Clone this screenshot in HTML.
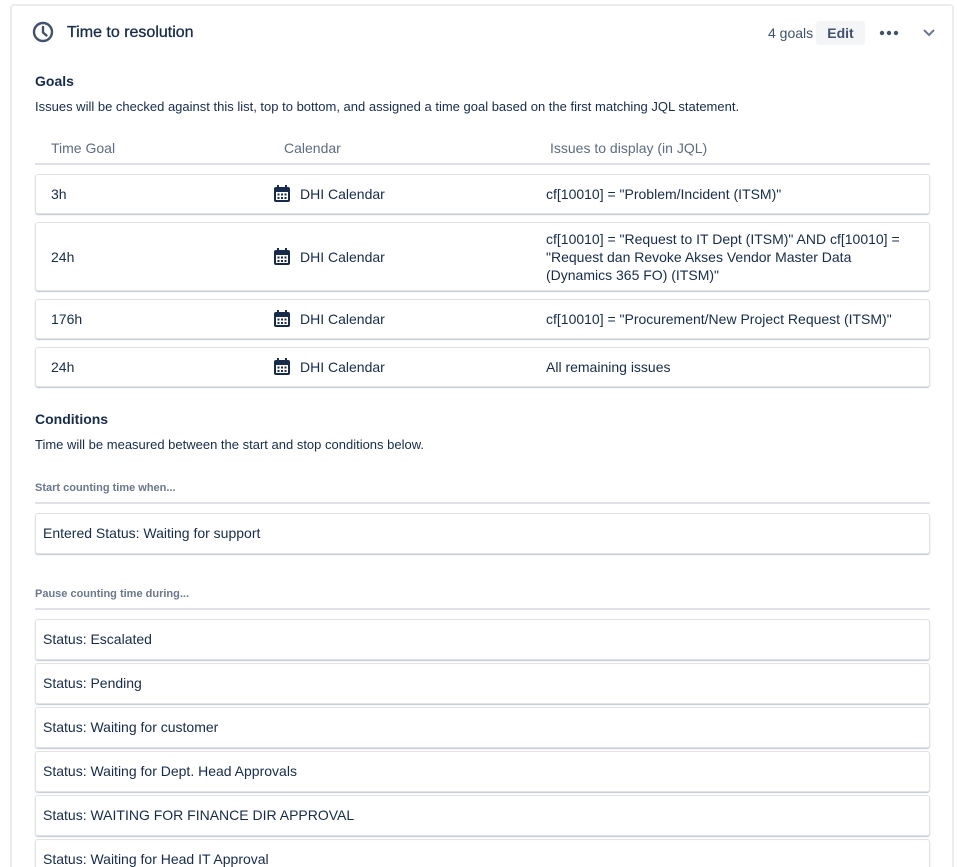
<!DOCTYPE html>
<html style="height:867px;overflow:hidden"><head><style>
*{box-sizing:border-box;margin:0;padding:0}
body{width:957px;height:867px;overflow:hidden;background:#fff;font-family:"Liberation Sans",sans-serif;color:#172b4d;font-size:14px;position:relative}
.card{position:absolute;left:10px;top:4px;width:944px;height:880px;border:2px solid #ebecf0;border-radius:4px}
.abs{position:absolute}
.row{position:absolute;left:35px;width:895px;border:1px solid #dfe1e6;border-radius:3px;box-shadow:0 1px 1px rgba(9,30,66,.25)}
.row span{position:absolute;top:50%;transform:translateY(-50%)}
.cal{left:237px;display:flex;align-items:center;gap:9px}
.lbl{font-size:11px;font-weight:bold;color:#6b778c}
.line{position:absolute;left:35px;width:895px;height:2px;background:#dfe1e6}
.cond{position:absolute;left:35px;width:895px;height:41px;border:1px solid #dfe1e6;border-radius:3px;box-shadow:0 1px 1px rgba(9,30,66,.25);padding-left:7px;line-height:39px}
</style></head><body>
<div class="card"></div>
<svg class="abs" style="left:32px;top:21px" width="22" height="22" viewBox="0 0 22 22"><circle cx="11" cy="11" r="9" fill="none" stroke="#42526e" stroke-width="2.4"/><path d="M11 6v5.5l3.5 3" fill="none" stroke="#42526e" stroke-width="2.4" stroke-linecap="round"/></svg>
<div class="abs" style="left:67px;top:24px;font-size:16px;-webkit-text-stroke:0.3px #172b4d">Time to resolution</div>
<div class="abs" style="left:768px;top:25px;color:#42526e">4 goals</div>
<div class="abs" style="left:816px;top:21px;width:49px;height:24px;background:#f4f5f7;border-radius:3px;text-align:center;line-height:24px;color:#42526e;font-weight:bold">Edit</div>
<svg class="abs" style="left:879px;top:30px" width="20" height="6"><circle cx="3" cy="3" r="2.2" fill="#42526e"/><circle cx="10" cy="3" r="2.2" fill="#42526e"/><circle cx="17" cy="3" r="2.2" fill="#42526e"/></svg>
<svg class="abs" style="left:922px;top:28px" width="14" height="10"><path d="M2 2l5 5 5-5" fill="none" stroke="#6b778c" stroke-width="2"/></svg>
<div class="abs" style="left:35px;top:73px;font-weight:bold;font-size:14px">Goals</div>
<div class="abs" style="left:35px;top:99px;font-size:13px">Issues will be checked against this list, top to bottom, and assigned a time goal based on the first matching JQL statement.</div>
<div class="abs" style="left:51px;top:140px;color:#5e6c84">Time Goal</div>
<div class="abs" style="left:284px;top:140px;color:#5e6c84">Calendar</div>
<div class="abs" style="left:550px;top:140px;color:#5e6c84">Issues to display (in JQL)</div>
<div class="line" style="top:163px"></div>
<svg width="0" height="0" style="position:absolute"><defs><g id="ci"><rect x="1" y="2" width="16" height="15" rx="2" fill="#172b4d"/><rect x="4" y="0" width="2" height="4" fill="#172b4d"/><rect x="12" y="0" width="2" height="4" fill="#172b4d"/><rect x="3" y="7" width="12" height="8" fill="#fff"/><g fill="#172b4d"><rect x="4.5" y="8.5" width="2" height="2"/><rect x="8" y="8.5" width="2" height="2"/><rect x="11.5" y="8.5" width="2" height="2"/><rect x="4.5" y="12" width="2" height="2"/><rect x="8" y="12" width="2" height="2"/><rect x="11.5" y="12" width="2" height="2"/></g></g></defs></svg>
<div class="row" style="top:174px;height:40px"><span style="left:15px">3h</span><span class="cal"><svg width="18" height="18"><use href="#ci"/></svg>DHI Calendar</span><span style="left:510px">cf[10010] = "Problem/Incident (ITSM)"</span></div>
<div class="row" style="top:222px;height:69px"><span style="left:15px">24h</span><span class="cal"><svg width="18" height="18"><use href="#ci"/></svg>DHI Calendar</span><span style="left:510px;width:375px;line-height:18px">cf[10010] = "Request to IT Dept (ITSM)" AND cf[10010] = "Request dan Revoke Akses Vendor Master Data (Dynamics 365 FO) (ITSM)"</span></div>
<div class="row" style="top:299px;height:40px"><span style="left:15px">176h</span><span class="cal"><svg width="18" height="18"><use href="#ci"/></svg>DHI Calendar</span><span style="left:510px">cf[10010] = "Procurement/New Project Request (ITSM)"</span></div>
<div class="row" style="top:347px;height:40px"><span style="left:15px">24h</span><span class="cal"><svg width="18" height="18"><use href="#ci"/></svg>DHI Calendar</span><span style="left:510px">All remaining issues</span></div>
<div class="abs" style="left:35px;top:411px;font-weight:bold">Conditions</div>
<div class="abs" style="left:35px;top:437px;font-size:13px">Time will be measured between the start and stop conditions below.</div>
<div class="abs lbl" style="left:35px;top:482px">Start counting time when...</div>
<div class="line" style="top:502px"></div>
<div class="cond" style="top:513px">Entered Status: Waiting for support</div>
<div class="abs lbl" style="left:35px;top:588px">Pause counting time during...</div>
<div class="line" style="top:608px"></div>
<div class="cond" style="top:619px">Status: Escalated</div>
<div class="cond" style="top:663px">Status: Pending</div>
<div class="cond" style="top:707px">Status: Waiting for customer</div>
<div class="cond" style="top:751px">Status: Waiting for Dept. Head Approvals</div>
<div class="cond" style="top:795px">Status: WAITING FOR FINANCE DIR APPROVAL</div>
<div class="cond" style="top:839px">Status: Waiting for Head IT Approval</div>
</body></html>
